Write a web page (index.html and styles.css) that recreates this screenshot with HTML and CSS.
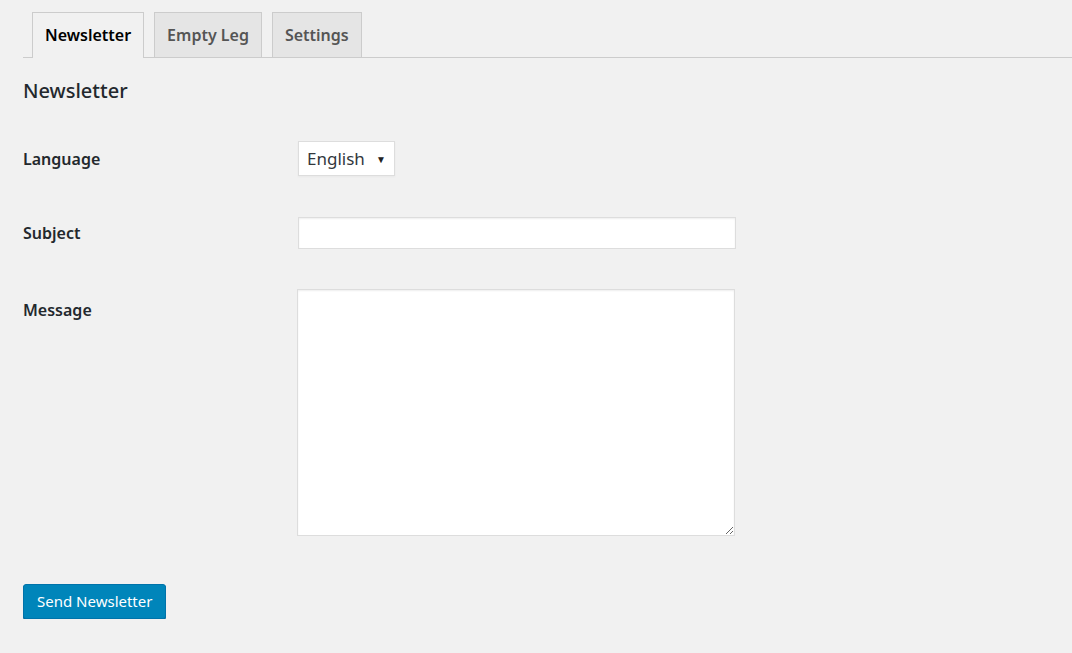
FILE: index.html
```html
<!DOCTYPE html>
<html lang="en">
<head>
  <meta charset="UTF-8">
  <title>Newsletter</title>
  <link rel="stylesheet" href="styles.css">
</head>
<body>
<div class="wrap">
  <nav class="nav-tabs">
    <a class="nav-tab active" href="#">Newsletter</a>
    <a class="nav-tab" href="#">Empty Leg</a>
    <a class="nav-tab" href="#">Settings</a>
  </nav>

  <h2 class="page-title">Newsletter</h2>

  <form class="form-table">
    <div class="form-row">
      <label for="language">Language</label>
      <div class="select-box">
        <select id="language">
          <option>English</option>
        </select>
        <span class="arrow">&#9660;</span>
      </div>
    </div>
    <div class="form-row">
      <label for="subject">Subject</label>
      <input type="text" id="subject" class="subject">
    </div>
    <div class="form-row top">
      <label for="message">Message</label>
      <textarea id="message"></textarea>
    </div>

    <button type="button" class="button-primary">Send Newsletter</button>
  </form>
</div>
</body>
</html>
```

FILE: styles.css
```css
body {
  margin: 0;
  background-color: #f1f1f1;
  color: #23282d;
  font-family: 'Noto Sans', 'Open Sans', sans-serif;
}
.wrap {
  padding: 12px 0 0 23px;
}
.nav-tabs {
  display: flex;
  gap: 10px;
  padding-left: 9px;
  border-bottom: 1px solid #ccc;
}
.nav-tab {
  display: block;
  height: 44px;
  line-height: 44px;
  padding: 0 12px;
  margin-bottom: -1px;
  border: 1px solid #ccc;
  border-bottom: none;
  background-color: #e5e5e5;
  color: #555;
  font-size: 16px;
  font-weight: 600;
  text-decoration: none;
}
.nav-tab.active {
  background-color: #f1f1f1;
  color: #000;
  height: 45px;
  margin-bottom: -1px;
}
.page-title {
  margin: 20px 0 0;
  font-size: 20px;
  font-weight: 500;
  color: #23282d;
  line-height: 26px;
}
.form-table {
  margin-top: 37px;
}
.form-row {
  display: flex;
  align-items: center;
  margin-bottom: 41px;
}
.form-row label {
  width: 275px;
  flex-shrink: 0;
  font-size: 16px;
  font-weight: 600;
  color: #23282d;
}
.form-row.top {
  align-items: flex-start;
  margin-top: -1px;
  margin-bottom: 48px;
}
.form-row.top label {
  padding-top: 10px;
  width: 274px;
}
.select-box {
  position: relative;
  width: 95px;
  height: 33px;
  background: #fff;
  border: 1px solid #ddd;
  box-shadow: 0 1px 2px rgba(0, 0, 0, 0.04);
}
.select-box select {
  appearance: none;
  -webkit-appearance: none;
  border: none;
  background: transparent;
  width: 100%;
  height: 100%;
  padding: 0 0 0 8px;
  font-family: inherit;
  font-size: 17px;
  color: #32373c;
  outline: none;
}
.select-box .arrow {
  position: absolute;
  right: 8px;
  top: 10px;
  font-size: 10px;
  color: #222;
  pointer-events: none;
}
.subject {
  width: 438px;
  height: 32px;
  padding: 0 6px;
  box-sizing: border-box;
  border: 1px solid #ddd;
  background: #fff;
  box-shadow: inset 0 1px 2px rgba(0, 0, 0, 0.07);
  font-size: 16px;
  font-family: inherit;
  outline: none;
}
textarea {
  width: 438px;
  height: 247px;
  box-sizing: border-box;
  border: 1px solid #ddd;
  background: #fff;
  box-shadow: inset 0 1px 2px rgba(0, 0, 0, 0.07);
  font-family: inherit;
  font-size: 16px;
  outline: none;
}
.button-primary {
  display: block;
  height: 35px;
  padding: 0 13px 2px;
  border: 1px solid #0073aa;
  border-radius: 3px;
  background-color: #0085ba;
  box-shadow: 0 1px 0 #006799;
  color: #fff;
  font-family: inherit;
  font-size: 15px;
  cursor: pointer;
}
```
